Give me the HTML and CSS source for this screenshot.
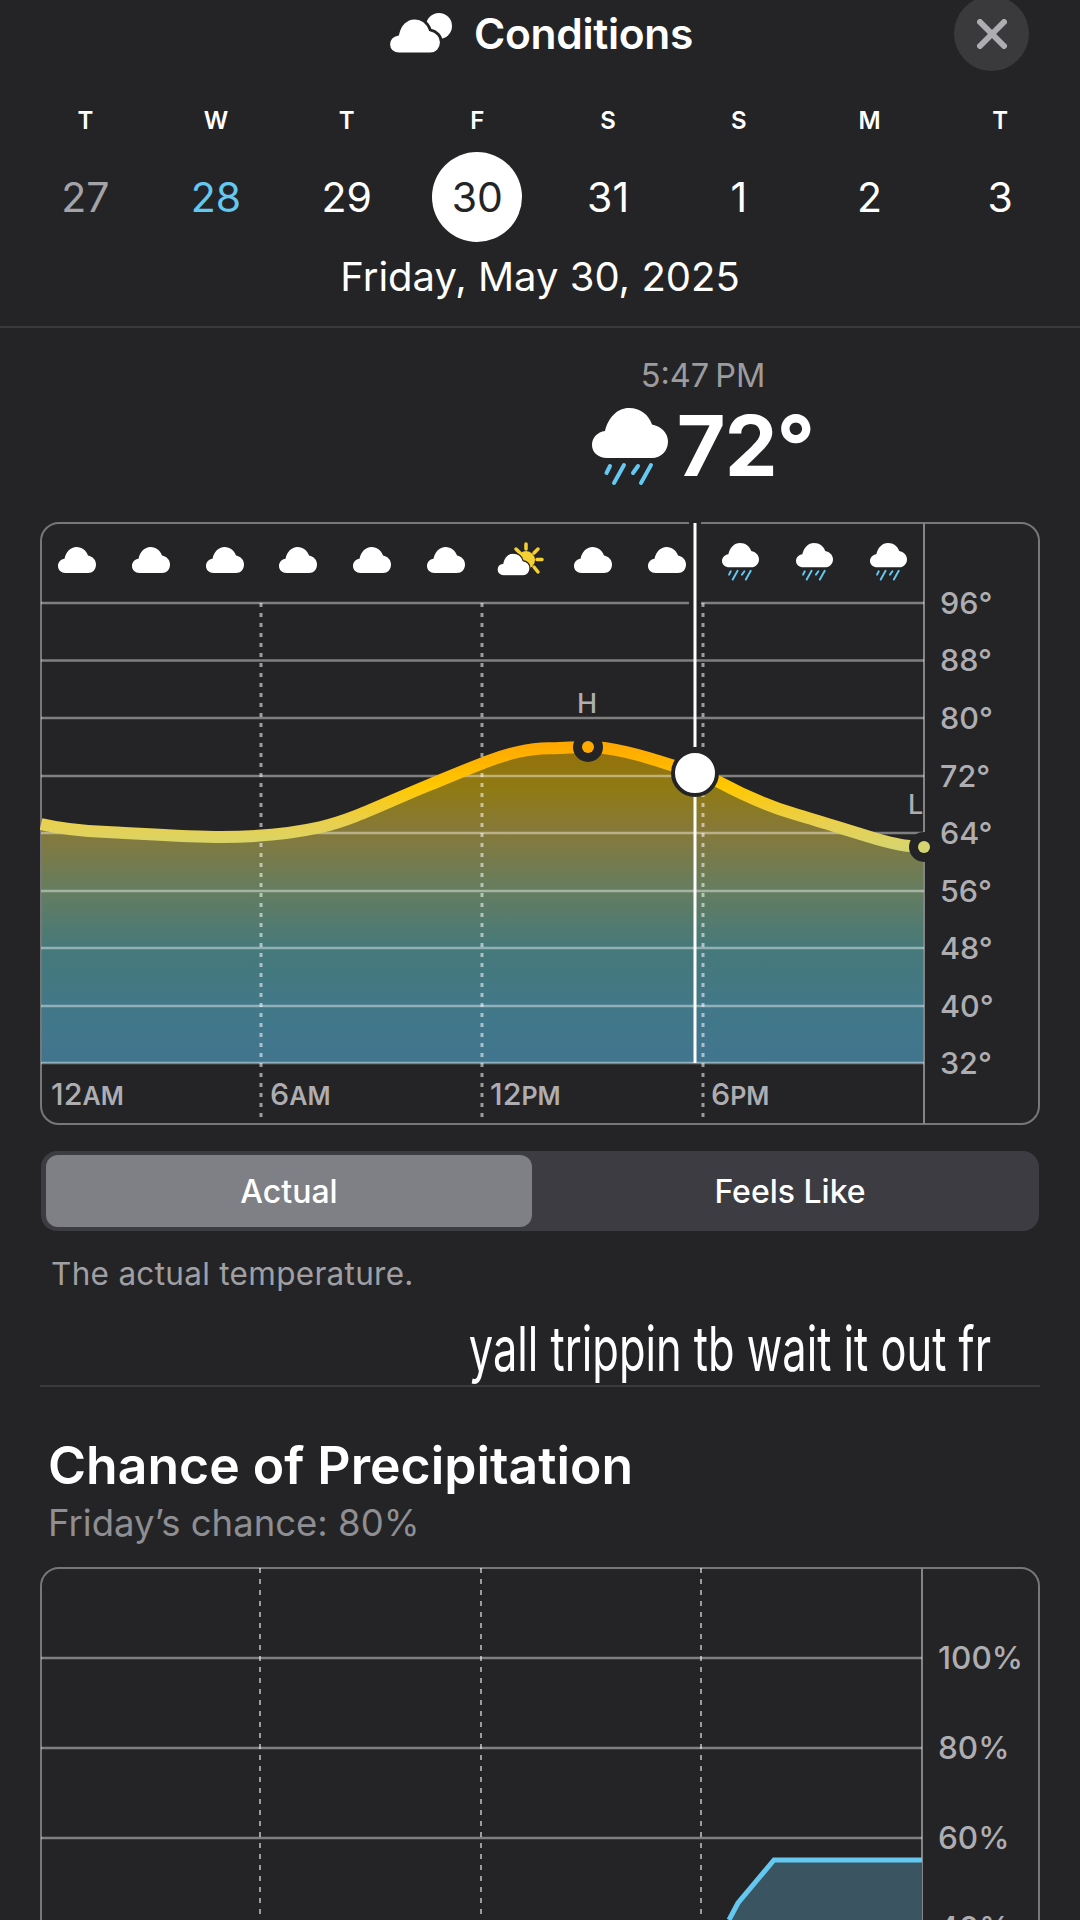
FILE: index.html
```html
<!DOCTYPE html>
<html lang="en">
<head>
	<meta charset="UTF-8">
	<meta name="viewport" content="width=device-width">
	<title>Conditions</title>

	<link rel="stylesheet" href="styles.css">
</head>
<body>

<!-- shared weather glyphs -->
<svg class="defs" width="0" height="0" aria-hidden="true">
	<symbol id="cloud" viewBox="0 0 38 26" overflow="visible">
		<path d="M7.5 26C3.2 26 0 23 0 19C0 15.2 2.8 12.3 6.5 11.8C8 5 12.5 0 18.5 0C24.2 0 28.5 3.6 30 8.6C34.7 9.6 38 13 38 17.5C38 22.5 34.5 26 30 26Z"/>
	</symbol>
	<symbol id="rain-cloud" viewBox="0 0 76 78">
		<path fill="#fff" d="M15 50C6.4 50 0 44.5 0 37C0 29.5 5.6 24 13 23C16 10 25 0 37 0C48.4 0 57 7 60 16.5C69.4 18.5 76 25 76 33.5C76 43 69 50 60 50Z"/>
		<path class="drops" d="M18 58L14.500 65M32 57L22 75M46 58L41 65M59 57L49 75"/>
	</symbol>
</svg>

<header class="top">
	<div class="title-row">
		<svg class="title-icon" viewBox="0 0 65 41">
			<circle cx="52" cy="13" r="13"/>
			<use href="#cloud" class="cloud-front" x="0" y="5" width="56" height="36"/>
		</svg>
		<h1 class="title">Conditions</h1>
	</div>
	<button class="close" aria-label="Close">
		<svg viewBox="0 0 30 30" width="30" height="30"><path d="M3 3L27 27M27 3L3 27"/></svg>
	</button>

	<div class="week">
		<span class="dow">T</span><span class="dow">W</span><span class="dow">T</span><span class="dow">F</span><span class="dow">S</span><span class="dow">S</span><span class="dow">M</span><span class="dow">T</span>
		<span class="day past">27</span>
		<span class="day today">28</span>
		<span class="day">29</span>
		<span class="day selected">30</span>
		<span class="day">31</span>
		<span class="day">1</span>
		<span class="day">2</span>
		<span class="day">3</span>
	</div>
	<div class="date">Friday, May 30, 2025</div>
</header>

<section class="now">
	<div class="now-time">5:47&#8201;PM</div>
	<div class="now-temp">
		<svg class="now-icon" viewBox="0 0 76 78"><use href="#rain-cloud"/></svg>
		<span>72°</span>
	</div>
</section>

<svg class="chart temp-chart" viewBox="40 522 1000 604">
	<defs>
		<linearGradient id="temp-fill" gradientUnits="userSpaceOnUse" x1="0" y1="745" x2="0" y2="1063">
			<stop offset="0" stop-color="#95700a"/>
			<stop offset=".14" stop-color="#8f7a14"/>
			<stop offset=".28" stop-color="#85793c"/>
			<stop offset=".46" stop-color="#647d60"/>
			<stop offset=".64" stop-color="#46797a"/>
			<stop offset=".82" stop-color="#427888"/>
			<stop offset="1" stop-color="#41758f"/>
		</linearGradient>
		<linearGradient id="temp-line" gradientUnits="userSpaceOnUse" x1="0" y1="745" x2="0" y2="850">
			<stop offset="0" stop-color="#ffa800"/>
			<stop offset=".4" stop-color="#ffc800"/>
			<stop offset=".75" stop-color="#e8d050"/>
			<stop offset="1" stop-color="#d4d570"/>
		</linearGradient>
	</defs>

	<path fill="url(#temp-fill)" d="M41 824C62 829 84 831 107 832S190 837 221 837C255 837 290 834 321 827C355 819 385 803 429 785S495 757 518 752S545 749 560 748S578 747.300 588 747S613 749 626 752S656 760 671 765S703 775 719 782C745 796 770 807 798 815S865 836 884 841S908 846 924 847V1063H41Z"/>

	<rect class="frame" x="41" y="523" width="998" height="601" rx="18"/>
	<path class="axis-line" d="M924 523V1124"/>
	<path class="grid" d="M41 603H924M41 660.500H924M41 718H924M41 776H924M41 833H924M41 891H924M41 948H924M41 1006H924M41 1063H924"/>
	<path class="dash" d="M261 603V1120M482 603V1120M703 603V1120"/>

	<rect class="halo" x="689" y="520" width="12" height="6"/>
	<rect class="halo" x="689" y="600" width="12" height="6"/>
	<path class="index-line" d="M695 523V747M695 775V1063"/>

	<path class="temp-stroke" d="M41 824C62 829 84 831 107 832S190 837 221 837C255 837 290 834 321 827C355 819 385 803 429 785S495 757 518 752S545 749 560 748S578 747.300 588 747S613 749 626 752S656 760 671 765S703 775 719 782C745 796 770 807 798 815S865 836 884 841S908 846 924 847"/>

	<circle class="halo" cx="588" cy="747" r="15"/>
	<circle cx="588" cy="747" r="6" fill="#ffa800"/>
	<circle class="halo" cx="924" cy="847" r="15"/>
	<circle cx="924" cy="847" r="6" fill="#d4d570"/>
	<circle class="knob" cx="695" cy="773" r="22"/>

	<text class="marker" x="587" y="713" text-anchor="middle">H</text>
	<text class="marker" x="908" y="814">L</text>

	<g class="hour-icons">
		<use href="#cloud" x="58" y="547" width="38" height="26"/>
		<use href="#cloud" x="132" y="547" width="38" height="26"/>
		<use href="#cloud" x="206" y="547" width="38" height="26"/>
		<use href="#cloud" x="279" y="547" width="38" height="26"/>
		<use href="#cloud" x="353" y="547" width="38" height="26"/>
		<use href="#cloud" x="427" y="547" width="38" height="26"/>
		<circle cx="526" cy="560" r="9" fill="#f5d033"/>
		<path class="rays" d="M526 544V549M516 549L520 553M538 549L534 553M537 559.500H542M534 567L538 572"/>
		<use href="#cloud" class="cloud-over" x="497" y="553" width="33" height="23"/>
		<use href="#cloud" x="574" y="547" width="38" height="26"/>
		<use href="#cloud" x="648" y="547" width="38" height="26"/>
		<use href="#rain-cloud" x="722" y="543" width="37" height="38"/>
		<use href="#rain-cloud" x="796" y="543" width="37" height="38"/>
		<use href="#rain-cloud" x="870" y="543" width="37" height="38"/>
	</g>

	<g class="axis-text">
		<text x="940" y="614">96°</text>
		<text x="940" y="671">88°</text>
		<text x="940" y="729">80°</text>
		<text x="940" y="787">72°</text>
		<text x="940" y="844">64°</text>
		<text x="940" y="902">56°</text>
		<text x="940" y="959">48°</text>
		<text x="940" y="1017">40°</text>
		<text x="940" y="1074">32°</text>
		<text x="51" y="1105">12<tspan class="ampm">AM</tspan></text>
		<text x="270" y="1105">6<tspan class="ampm">AM</tspan></text>
		<text x="490" y="1105">12<tspan class="ampm">PM</tspan></text>
		<text x="711" y="1105">6<tspan class="ampm">PM</tspan></text>
	</g>
</svg>

<div class="segmented">
	<button class="segment active">Actual</button>
	<button class="segment">Feels Like</button>
</div>

<div class="note-row">
	<p class="note">The actual temperature.</p>
	<p class="overlay-text">yall trippin tb wait it out fr</p>
</div>

<section class="precip">
	<h2 class="precip-title">Chance of Precipitation</h2>
	<p class="precip-sub">Friday’s chance: 80%</p>

	<svg class="chart precip-chart" viewBox="40 1567 1000 353">
		<rect class="frame" x="41" y="1568" width="998" height="700" rx="18"/>
		<path class="axis-line" d="M922 1568V1920"/>
		<path class="grid" d="M41 1658H922M41 1748H922M41 1838H922"/>
		<path class="dash thin" d="M260 1568V1920M481 1568V1920M701 1568V1920"/>
		<path fill="#3b5461" d="M729 1920L738 1903L774 1860H922V1920Z"/>
		<path class="rain-stroke" d="M729 1920L738 1903L774 1860H922"/>
		<g class="axis-text wide">
			<text x="938" y="1669">100%</text>
			<text x="938" y="1759">80%</text>
			<text x="938" y="1849">60%</text>
			<text x="938" y="1939">40%</text>
		</g>
	</svg>
</section>

</body>
</html>
```

FILE: styles.css
```css
* { box-sizing: border-box; }

html, body {
	margin: 0;
	height: 1920px;
	overflow: hidden;
}

body {
	background: #242426;
	color: #fff;
	font-family: Inter, "Noto Sans", sans-serif;
}

.defs { position: absolute; }

.drops {
	fill: none;
	stroke: #64c8f0;
	stroke-width: 4;
	stroke-linecap: round;
}

/* header */
.top {
	position: relative;
	padding-bottom: 25px;
	border-bottom: 2px solid #3a3a3c;
}

.title-row {
	display: flex;
	justify-content: center;
	align-items: center;
	gap: 22px;
	height: 66px;
}

.title-icon {
	width: 65px;
	height: 41px;
	fill: #fff;
}

.cloud-front {
	stroke: #242426;
	stroke-width: 2;
}

.title {
	margin: 0;
	font-size: 42.500px;
	font-weight: 600;
	letter-spacing: -0.3px;
}

.close {
	position: absolute;
	left: 954px;
	top: -4px;
	display: flex;
	align-items: center;
	justify-content: center;
	width: 75px;
	height: 75px;
	padding: 0;
	border: 0;
	border-radius: 50%;
	background: #3a3a3d;
}

.close path {
	fill: none;
	stroke: #aeaeb2;
	stroke-width: 6;
	stroke-linecap: round;
}

.week {
	display: grid;
	grid-template-columns: repeat(8, 130.700px);
	grid-template-rows: 30px 90px;
	row-gap: 17px;
	align-items: center;
	justify-items: center;
	margin-top: 39px;
	padding-left: 20px;
}

.dow {
	font-size: 24px;
	font-weight: 600;
}

.day {
	display: flex;
	align-items: center;
	justify-content: center;
	width: 90px;
	height: 90px;
	border-radius: 50%;
	font-size: 41px;
	font-weight: 400;
}

.day.past { color: #a4a4a8; }
.day.today { color: #64c8f0; }

.day.selected {
	background: #fff;
	color: #242426;
}

.date {
	margin-top: 11px;
	font-size: 40px;
	line-height: 48px;
	text-align: center;
}

/* current reading */
.now {
	margin-top: 28px;
	padding-left: 326px;
	text-align: center;
}

.now-time {
	font-size: 32.500px;
	line-height: 40px;
	color: #9c9c9f;
}

.now-temp {
	display: flex;
	justify-content: center;
	align-items: flex-start;
	gap: 9px;
	height: 80px;
	margin-top: 10px;
	font-size: 84px;
	font-weight: 700;
	letter-spacing: -1px;
	line-height: 80px;
}

.now-icon {
	width: 76px;
	height: 78px;
	margin-top: 2px;
}

/* charts */
.chart {
	display: block;
	width: 1000px;
	margin-left: 40px;
}

.temp-chart {
	height: 604px;
	margin-top: 36px;
}

.frame {
	fill: none;
	stroke: #77777a;
	stroke-width: 2;
}

.axis-line {
	fill: none;
	stroke: #848487;
	stroke-width: 2;
}

.grid {
	fill: none;
	stroke: rgba(255, 255, 255, .42);
	stroke-width: 2.500;
}

.dash {
	fill: none;
	stroke: rgba(255, 255, 255, .55);
	stroke-width: 3;
	stroke-dasharray: 4 6;
}

.dash.thin {
	stroke-width: 2;
	stroke-dasharray: 5 6;
}

.halo { fill: #242426; }

.index-line {
	fill: none;
	stroke: #fff;
	stroke-width: 3;
}

.temp-stroke {
	fill: none;
	stroke: url(#temp-line);
	stroke-width: 12;
}

.knob {
	fill: #fff;
	stroke: #242426;
	stroke-width: 4;
}

.marker {
	font-size: 27px;
	font-weight: 500;
	fill: #aeaeb2;
}

.hour-icons { fill: #fff; }

.rays {
	fill: none;
	stroke: #f5d033;
	stroke-width: 3.500;
	stroke-linecap: round;
}

.cloud-over {
	stroke: #242426;
	stroke-width: 1.500;
}

.axis-text text {
	font-size: 30.500px;
	font-weight: 500;
	fill: #aeaeb2;
}

.axis-text.wide text { font-size: 31.500px; }

.axis-text .ampm {
	font-size: 25px;
	font-weight: 600;
}

.rain-stroke {
	fill: none;
	stroke: #64c8f0;
	stroke-width: 5;
}

/* actual / feels like switch */
.segmented {
	display: grid;
	grid-template-columns: 494px 1fr;
	width: 998px;
	height: 80px;
	margin: 25px 0 0 41px;
	padding: 4px 5px;
	border-radius: 16px;
	background: #3c3c42;
}

.segment {
	padding: 0;
	border: 0;
	border-radius: 12px;
	background: none;
	color: #fff;
	font: 500 32px Inter, "Noto Sans", sans-serif;
}

.segment.active {
	margin-right: 8px;
	background: #7f8085;
}

.segment:not(.active) { padding-left: 6px; }

/* note with the caption laid over it */
.note-row {
	position: relative;
	height: 156px;
	margin: 0 40px;
	border-bottom: 2px solid #3a3a3c;
}

.note {
	margin: 0;
	padding: 23px 0 0 11px;
	font-size: 31.500px;
	line-height: 40px;
	letter-spacing: 0.3px;
	color: #a0a0a4;
}

.overlay-text {
	position: absolute;
	right: 49px;
	top: 83px;
	margin: 0;
	font-size: 62px;
	font-weight: 400;
	line-height: 70px;
	white-space: nowrap;
	transform: scaleX(.7);
	transform-origin: right center;
}

/* precipitation */
.precip-title {
	margin: 48px 0 0 48px;
	font-size: 51.700px;
	font-weight: 600;
	line-height: 60px;
}

.precip-sub {
	margin: 8px 0 0 48px;
	font-size: 36.500px;
	line-height: 40px;
	color: #8e8e93;
}

.precip-chart {
	height: 353px;
	margin-top: 24px;
}
```
